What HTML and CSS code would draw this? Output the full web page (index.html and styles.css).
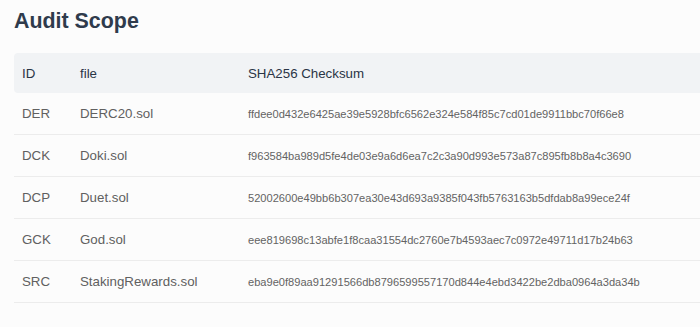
FILE: index.html
```html
<!DOCTYPE html>
<html>
<head>
<meta charset="utf-8">
<link rel="stylesheet" href="styles.css">
</head>
<body>
<main class="page">
  <h2 class="title">Audit Scope</h2>
  <table class="scope">
    <thead>
      <tr><th class="c-id">ID</th><th class="c-file">file</th><th class="c-sum">SHA256 Checksum</th></tr>
    </thead>
    <tbody>
      <tr><td>DER</td><td>DERC20.sol</td><td class="sum">ffdee0d432e6425ae39e5928bfc6562e324e584f85c7cd01de9911bbc70f66e8</td></tr>
      <tr><td>DCK</td><td>Doki.sol</td><td class="sum">f963584ba989d5fe4de03e9a6d6ea7c2c3a90d993e573a87c895fb8b8a4c3690</td></tr>
      <tr><td>DCP</td><td>Duet.sol</td><td class="sum">52002600e49bb6b307ea30e43d693a9385f043fb5763163b5dfdab8a99ece24f</td></tr>
      <tr><td>GCK</td><td>God.sol</td><td class="sum">eee819698c13abfe1f8caa31554dc2760e7b4593aec7c0972e49711d17b24b63</td></tr>
      <tr><td>SRC</td><td>StakingRewards.sol</td><td class="sum">eba9e0f89aa91291566db8796599557170d844e4ebd3422be2dba0964a3da34b</td></tr>
    </tbody>
  </table>
</main>
</body>
</html>
```

FILE: styles.css
```css
html, body {
  margin: 0;
  padding: 0;
  background: #fcfcfc;
  font-family: "Liberation Sans", Arial, sans-serif;
}
.page {
  padding: 9px 0 0 14px;
}
.title {
  margin: 0 0 20px 0;
  font-size: 21.4px;
  line-height: 24px;
  font-weight: 700;
  color: #2f3b4c;
}
.scope {
  width: 700px;
  border-collapse: separate;
  border-spacing: 0;
  table-layout: fixed;
}
.scope th {
  background: #f1f3f5;
  height: 40px;
  padding: 0 0 0 8px;
  text-align: left;
  font-weight: 400;
  font-size: 13.3px;
  color: #2a3545;
}
.scope th.c-id { width: 50px; border-radius: 4px 0 0 4px; }
.scope th.c-file { width: 160px; }
.scope td {
  height: 41px;
  padding: 0 0 0 8px;
  font-size: 13.3px;
  color: #606060;
  border-bottom: 1px solid #ececec;
  white-space: nowrap;
}
.scope td.sum {
  font-size: 11.1px;
  color: #636363;
}
```
